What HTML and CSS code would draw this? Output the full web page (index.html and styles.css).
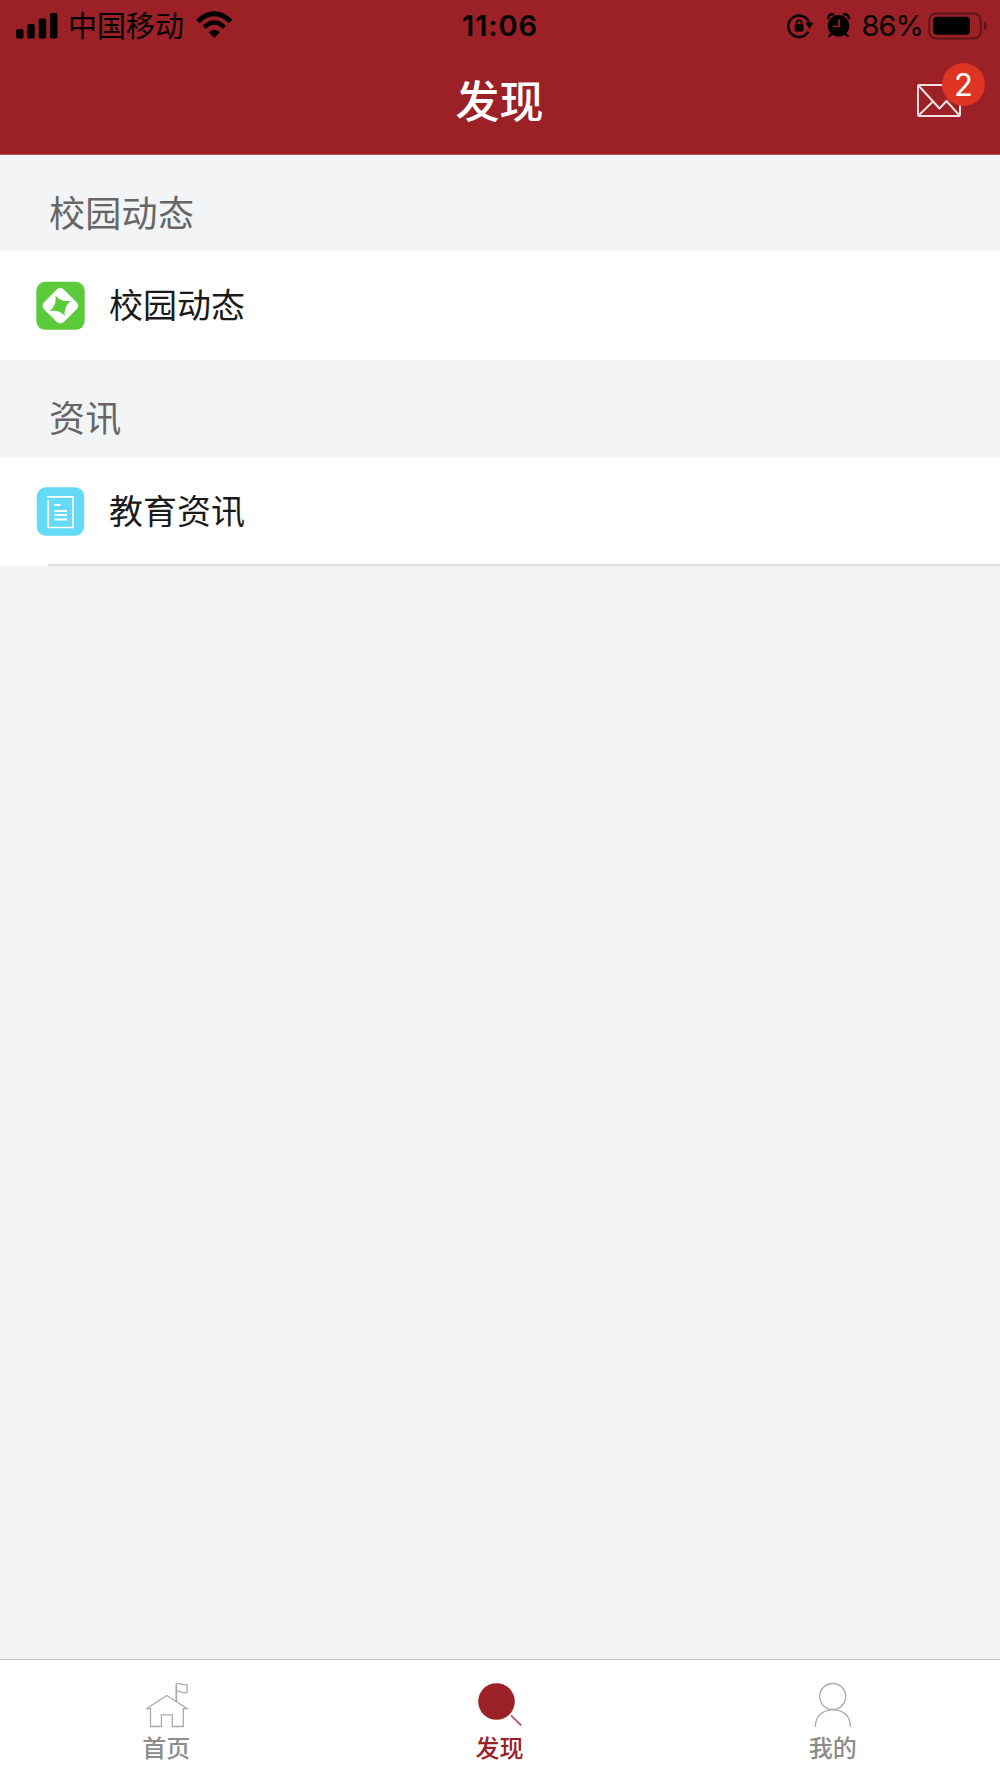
FILE: index.html
```html
<!DOCTYPE html>
<html lang="zh-CN">

<head>
    <meta charset="UTF-8">
    <meta name="viewport" content="width=device-width, initial-scale=1.0">
    <title>发现</title>
    <link rel="stylesheet" href="styles.css">
</head>

<body>
    <header class="header">
        <div class="status-bar">
            <div class="status-left">
                <svg class="icon-signal" width="42" height="26" viewBox="16 11.5 42 26">
                    <rect x="16" y="27.5" width="7.5" height="9.5" rx="2"/>
                    <rect x="27.3" y="22.5" width="7.5" height="14.5" rx="2"/>
                    <rect x="38.7" y="17" width="7.5" height="20" rx="2"/>
                    <rect x="50" y="11.5" width="7.5" height="25.5" rx="2"/>
                </svg>
                <span class="carrier">中国移动</span>
                <svg class="icon-wifi" width="38" height="28" viewBox="195 9 38 28">
                    <path d="M198 20.500C207.500 10 221 10 230.500 20.500" fill="none" stroke="#000" stroke-width="5"/>
                    <path d="M204.300 26.500C210 19.800 218.500 19.800 224.200 26.500" fill="none" stroke="#000" stroke-width="4.600"/>
                    <path d="M208.700 31.300C212 27.800 216.500 27.800 219.800 31.300L214.300 37Z"/>
                </svg>
            </div>
            <span class="time">11:06</span>
            <div class="status-right">
                <svg class="icon-lock" width="28" height="26" viewBox="786 12.500 28 26">
                    <path d="M808.300 31.200A10.700 10.700 0 1 1 809.400 23" fill="none" stroke="#000" stroke-width="2.300"/>
                    <path d="M805.500 22.300H813.200L809.300 28.500Z"/>
                    <rect x="794.800" y="23.800" width="8.600" height="7.200" rx="1"/>
                    <path d="M796.600 24.500V22.200a2.500 2.500 0 0 1 5 0v2.300" fill="none" stroke="#000" stroke-width="1.600"/>
                </svg>
                <svg class="icon-alarm" width="24" height="26" viewBox="827 12.500 24 26">
                    <circle cx="838.500" cy="25.300" r="10.800"/>
                    <path d="M828.300 18.800A4 4 0 0 1 834.200 14.300M848.700 18.800A4 4 0 0 0 842.800 14.300" fill="none" stroke="#000" stroke-width="2.400"/>
                    <path d="M832.500 32.500L829.300 35.800M844.500 32.500L847.700 35.800" stroke="#000" stroke-width="2.200" stroke-linecap="round"/>
                    <path d="M839 18.800V26H832.500" fill="none" stroke="#9b2127" stroke-width="1.700"/>
                </svg>
                <span class="percent">86%</span>
                <svg class="icon-battery" width="60" height="28" viewBox="928 10.500 60 28">
                    <rect x="929.200" y="12" width="51.600" height="25" rx="7" fill="none" stroke="#5e1419" stroke-width="2"/>
                    <rect x="933" y="15.300" width="37" height="18" rx="4"/>
                    <path d="M984 19.700c3.700 1.700 3.700 7.600 0 9.300Z" fill="#5e1419"/>
                </svg>
            </div>
        </div>
        <div class="nav-bar">
            <h1 class="title">发现</h1>
            <a class="mail">
                <svg width="44" height="33" viewBox="0 0 44 33" fill="none" stroke="#f6dfe1" stroke-width="2" stroke-linejoin="round">
                    <rect x="1" y="1" width="42" height="31" rx="1"/>
                    <path d="M1.500 1.500L22.500 24.500L29.500 17L42.500 31.500M1.500 31.500L16 17.500"/>
                </svg>
                <span class="badge">2</span>
            </a>
        </div>
    </header>

    <main class="content">
        <h2 class="section-title section-first">校园动态</h2>
        <div class="row">
            <svg class="row-icon" width="49" height="49" viewBox="0 0 49 49">
                <rect x=".3" y=".8" width="48.400" height="48" rx="9" fill="#5bca3b"/>
                <rect x="10.300" y="10.800" width="28" height="28" rx="5" fill="#fff" transform="rotate(45 24.300 24.800)"/>
                <path d="M19.500 14.500Q25 21.500 35 19.700Q27.500 25.500 28.800 35Q23.500 28.500 13.700 30Q21 24.500 19.500 14.500Z" fill="#5bca3b"/>
            </svg>
            <span class="row-label">校园动态</span>
        </div>

        <h2 class="section-title">资讯</h2>
        <div class="row row-last">
            <svg class="row-icon" width="49" height="49" viewBox="0 0 49 49">
                <rect x=".8" y=".3" width="47.400" height="48.400" rx="9" fill="#64daf6"/>
                <path d="M11 9.800H37V40.500H12.200V13" fill="none" stroke="#fff" stroke-width="1.700"/>
                <path d="M18.500 18H24.500M18.500 24H31M18.500 28H31M18.500 32.500H31" fill="none" stroke="#fff" stroke-width="2"/>
            </svg>
            <span class="row-label">教育资讯</span>
        </div>
    </main>

    <nav class="tab-bar">
        <a class="tab">
            <svg width="44" height="46" viewBox="145 1682 44 46" fill="none" stroke="#aaa" stroke-width="1.300">
                <path d="M146.500 1708.700L166.700 1695.500L187.300 1708.700H183.300V1726.500H172.300V1714.800H161.400V1726.500H150.500V1708.700Z"/>
                <path d="M176.300 1701.800V1683.500" stroke-width="1.700"/>
                <path d="M176.300 1683.500C181 1682.500 182 1686 187 1684.500V1692.500C182 1694 181 1690.500 176.300 1691.300"/>
            </svg>
            <span class="tab-label">首页</span>
        </a>
        <a class="tab active">
            <svg width="44" height="46" viewBox="478 1682 44 46">
                <circle cx="496.500" cy="1701.500" r="18.300" fill="#9b2127"/>
                <path d="M511 1715.300L521.300 1725.500" stroke="#b55a5f" stroke-width="1.800"/>
            </svg>
            <span class="tab-label">发现</span>
        </a>
        <a class="tab">
            <svg width="44" height="46" viewBox="811 1682 44 46" fill="none" stroke="#aaa" stroke-width="1.300">
                <circle cx="832.700" cy="1696.500" r="13"/>
                <path d="M815.300 1727C815.300 1716 822.500 1709.800 832.900 1709.800S850.500 1716 850.500 1727"/>
            </svg>
            <span class="tab-label">我的</span>
        </a>
    </nav>
</body>

</html>
```
FILE: styles.css
```css
* {
    box-sizing: border-box;
    margin: 0;
    padding: 0;
}

body {
    display: flex;
    flex-direction: column;
    height: 1778px;
    background: #f3f4f6;
    font-family: Inter, "Noto Sans CJK SC", sans-serif;
    color: #1a1a1a;
}

svg {
    display: block;
    flex: none;
}

/* 顶部 */
.header {
    height: 155px;
    background: #9b2127;
    border-bottom: 1px solid #b9555c;
}

.status-bar {
    display: grid;
    grid-template-columns: 1fr auto 1fr;
    height: 49px;
    padding: 0 12px 0 16px;
    color: #000;
}

.status-left,
.status-right {
    display: flex;
    align-items: center;
}

.status-right {
    justify-content: flex-end;
}

.carrier {
    margin: 0 11px 0 10px;
    padding-bottom: 2px;
    font-family: "Noto Sans CJK SC", sans-serif;
    font-size: 29px;
    line-height: 47px;
}

.icon-wifi {
    margin-bottom: 3px;
}

.time {
    margin-right: 4px;
    font-size: 29px;
    font-weight: 600;
    line-height: 51px;
    letter-spacing: 0.9px;
}

.icon-alarm {
    margin-left: 13px;
}

.percent {
    margin: 0 5px 0 11px;
    font-size: 29px;
    line-height: 51px;
    letter-spacing: -1px;
}

.nav-bar {
    display: grid;
    grid-template-columns: 1fr auto 1fr;
    align-items: center;
    height: 103px;
}

.title {
    grid-column: 2;
    padding: 0 1px 2px 0;
    font-family: "Noto Sans CJK SC", sans-serif;
    font-size: 44px;
    font-weight: 500;
    line-height: 101px;
    color: #fff;
}

.mail {
    position: relative;
    justify-self: end;
    margin-right: 39px;
}

.badge {
    position: absolute;
    top: -21px;
    right: -24px;
    width: 43px;
    height: 43px;
    border-radius: 50%;
    background: #de3423;
    color: #fff;
    font-size: 31px;
    line-height: 43px;
    text-align: center;
}

/* 列表 */
.content {
    flex: 1;
}

.section-title {
    height: 97px;
    padding: 21px 0 0 49px;
    font-size: 36px;
    font-weight: 400;
    line-height: 76px;
    letter-spacing: 0.3px;
    color: #666;
}

.section-first {
    height: 96px;
}

.row {
    display: flex;
    align-items: center;
    height: 109px;
    padding-left: 36px;
    background: #fff;
}

.row-label {
    margin-left: 24px;
    font-size: 34px;
    line-height: 107px;
    padding-bottom: 1px;
}

.row-last {
    background: linear-gradient(#dfe0e2, #dfe0e2) 48px 100% / 100% 2px no-repeat #fff;
}

/* 底部导航 */
.tab-bar {
    display: grid;
    grid-template-columns: repeat(3, 1fr);
    height: 119px;
    border-top: 1px solid #bfc0c2;
    background: #fff;
}

.tab {
    display: flex;
    flex-direction: column;
    align-items: center;
    padding-top: 22px;
    color: #8c8c8c;
}

.tab-label {
    margin-right: 1px;
    font-size: 24px;
    font-weight: 500;
    line-height: 41px;
}

.active {
    color: #9b2127;
}
```
